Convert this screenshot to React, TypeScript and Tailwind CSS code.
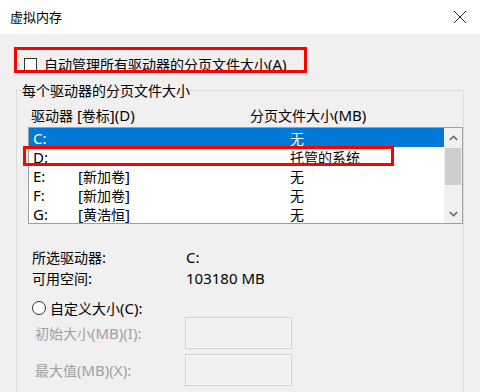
import React from "react";

function L({ children }: { children: React.ReactNode }) {
  return <span className="font-['Noto_Sans',sans-serif] text-[15px]">{children}</span>;
}

const rows = [
  { d: "C:", l: "", s: "无", sel: true },
  { d: "D:", l: "", s: "托管的系统", sel: false },
  { d: "E:", l: "新加卷", s: "无", sel: false },
  { d: "F:", l: "新加卷", s: "无", sel: false },
  { d: "G:", l: "黄浩恒", s: "无", sel: false },
];

export default function App() {
  return (
    <div className="w-[480px] h-[392px] overflow-hidden bg-[#f0f0f0] text-black text-[14px] leading-[20px] font-['Noto_Sans_CJK_SC',sans-serif] flex flex-col">
      {/* title bar */}
      <div className="h-[34px] shrink-0 bg-white flex items-center justify-between pl-[10px] pr-[13px]">
        <span className="text-[13px]">虚拟内存</span>
        <svg width="14" height="14" viewBox="0 0 14 14">
          <path d="M1 1L13 13M13 1L1 13" stroke="#222" strokeWidth="1" fill="none" />
        </svg>
      </div>

      {/* auto manage checkbox */}
      <div className="relative mt-[20px] h-[20px] shrink-0 flex items-center pl-[24px]">
        <span className="w-[13px] h-[13px] border border-[#333] bg-white shrink-0" />
        <span className="ml-[7px] whitespace-nowrap">
          自动管理所有驱动器的分页文件大小<L>(A)</L>
        </span>
        <div className="absolute left-[14px] top-[-7px] w-[293px] h-[26px] border-[3px] border-[#ff0000]" />
      </div>

      {/* group box */}
      <fieldset className="mt-[6px] ml-[16px] w-[448px] shrink-0 border border-[#dcdcdc] min-w-0 pb-[20px]">
        <legend className="ml-[5px] leading-[20px]">每个驱动器的分页文件大小</legend>

        <div className="mt-[5px] h-[20px] flex items-center pl-[14px] whitespace-nowrap">
          <span className="w-[219px]">
            驱动器<L> [</L>卷标<L>](D)</L>
          </span>
          <span>
            分页文件大小<L>(MB)</L>
          </span>
        </div>

        <div className="relative mt-[2px] ml-[11px] w-[435px] border border-[#a0a0a0] bg-white flex">
          <div className="flex-1">
            {rows.map((r) => (
              <div
                key={r.d}
                className={
                  "h-[19px] flex items-center whitespace-nowrap " +
                  (r.sel ? "bg-[#0078d7] text-white" : "text-black")
                }
              >
                <span className="pl-[4px] w-[49px]">
                  <L>{r.d}</L>
                </span>
                <span className="w-[212px]">
                  {r.l ? (
                    <>
                      <L>[</L>
                      {r.l}
                      <L>]</L>
                    </>
                  ) : null}
                </span>
                <span>{r.s}</span>
              </div>
            ))}
          </div>
          <div className="w-[18px] bg-[#f0f0f0] flex flex-col">
            <div className="h-[19px] flex items-center justify-center">
              <svg width="9" height="6" viewBox="0 0 9 6">
                <path d="M0.8 5L4.5 1.3L8.2 5" stroke="#606060" strokeWidth="1.5" fill="none" />
              </svg>
            </div>
            <div className="mt-[1px] mx-[1px] h-[37px] bg-[#cdcdcd]" />
            <div className="flex-1" />
            <div className="h-[19px] flex items-center justify-center">
              <svg width="9" height="6" viewBox="0 0 9 6">
                <path d="M0.8 1L4.5 4.7L8.2 1" stroke="#606060" strokeWidth="1.5" fill="none" />
              </svg>
            </div>
          </div>
          <div className="absolute left-[-6px] top-[18px] w-[371px] h-[20px] border-[3px] border-[#ff0000]" />
        </div>

        <div className="mt-[23px] h-[20px] flex items-center pl-[15px]">
          <span className="w-[154px]">
            所选驱动器<L>:</L>
          </span>
          <L>C:</L>
        </div>
        <div className="mt-[1px] h-[20px] flex items-center pl-[15px]">
          <span className="w-[154px]">
            可用空间<L>:</L>
          </span>
          <L>103180 MB</L>
        </div>

        <div className="mt-[10px] h-[19px] flex items-center pl-[15px]">
          <span className="w-[14px] h-[14px] rounded-full border border-[#333] bg-white shrink-0" />
          <span className="ml-[4px] whitespace-nowrap">
            自定义大小<L>(C):</L>
          </span>
        </div>

        <div className="h-[32px] flex items-center pl-[18px]">
          <span className="w-[150px] text-[#a0a0a0] whitespace-nowrap">
            初始大小<L>(MB)(I):</L>
          </span>
          <div className="w-[107px] h-[32px] border border-[#d0d0d0] shadow-[inset_0_0_0_1px_#f8f8f8] bg-[#f0f0f0]" />
        </div>
        <div className="mt-[5px] h-[32px] flex items-center pl-[18px]">
          <span className="w-[150px] text-[#a0a0a0] whitespace-nowrap">
            最大值<L>(MB)(X):</L>
          </span>
          <div className="w-[107px] h-[32px] border border-[#d0d0d0] shadow-[inset_0_0_0_1px_#f8f8f8] bg-[#f0f0f0]" />
        </div>
      </fieldset>
    </div>
  );
}
